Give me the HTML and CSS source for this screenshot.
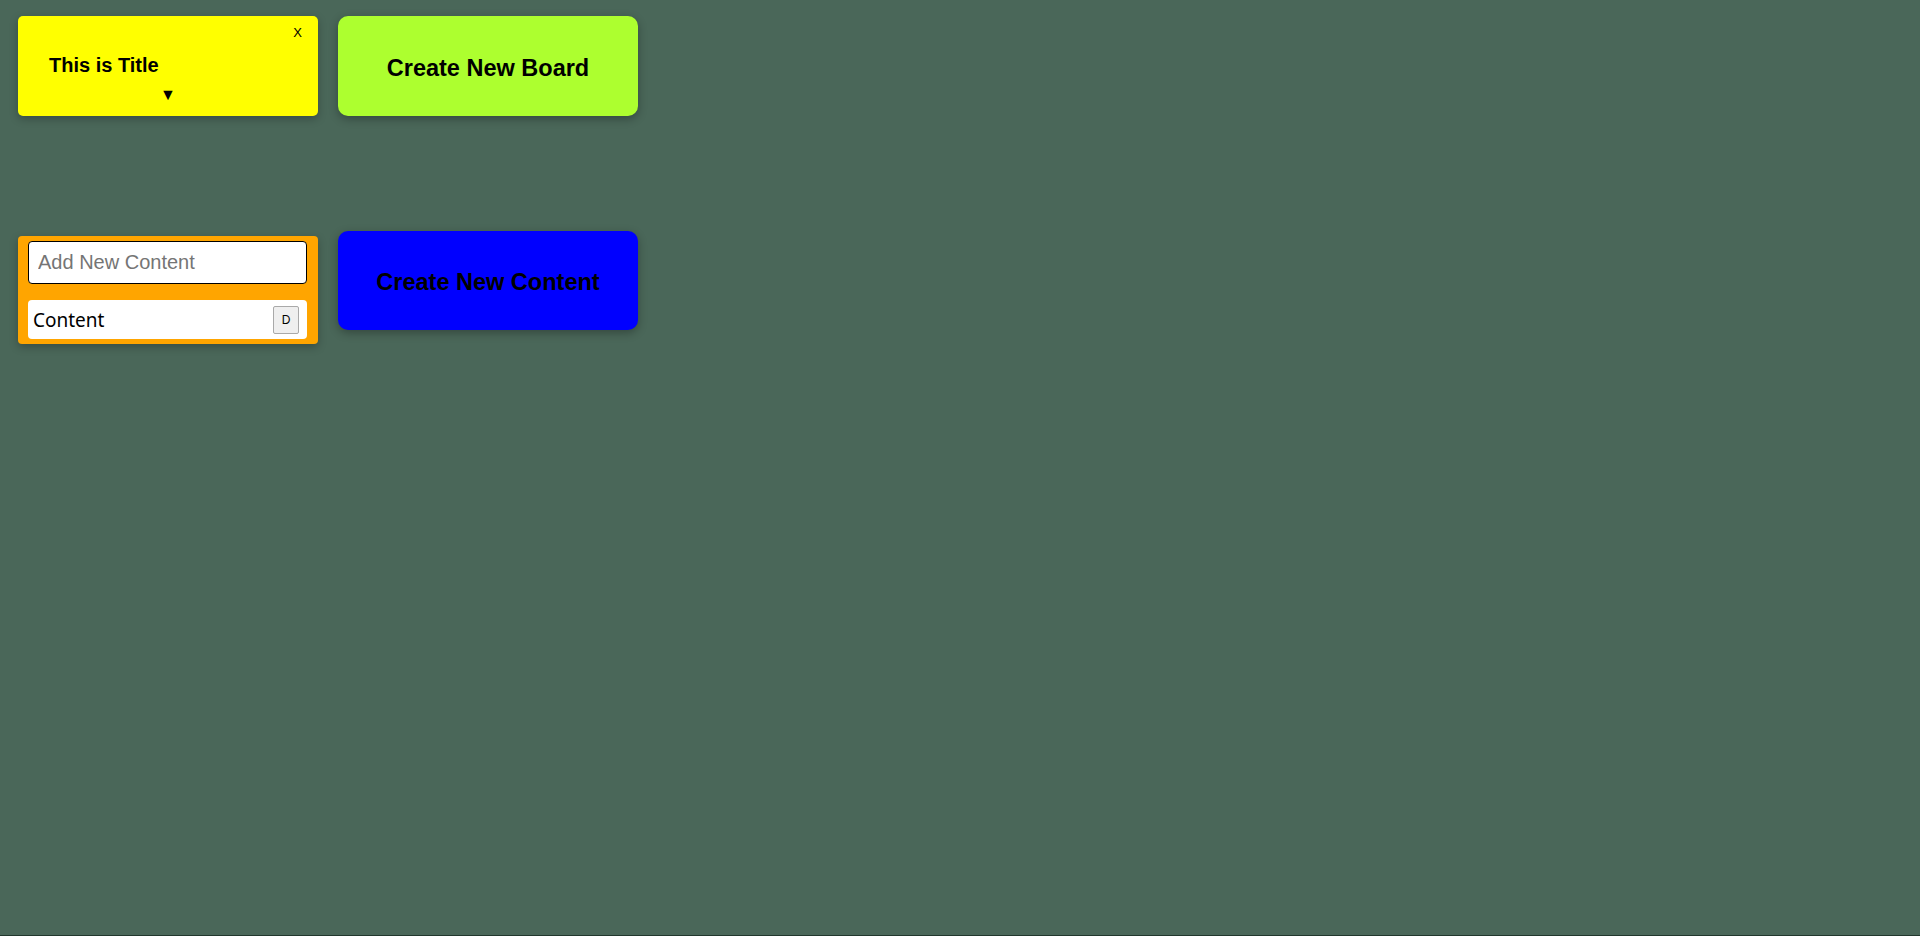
FILE: index.html
```html
<!DOCTYPE html>
<html lang="en">
<head>
<meta charset="utf-8">
<title>Boards</title>
<link rel="stylesheet" href="styles.css">
</head>
<body>
<div class="page">
  <div class="row row-top">
    <div class="board">
      <button class="close">X</button>
      <h3 class="board-title">This is Title</h3>
      <div class="toggle">&#9660;</div>
    </div>
    <button class="create create-board">Create New Board</button>
  </div>
  <div class="row row-bottom">
    <div class="content-card">
      <input class="content-input" type="text" placeholder="Add New Content">
      <div class="content-item">
        <span class="content-text">Content</span>
        <button class="del">D</button>
      </div>
    </div>
    <button class="create create-content">Create New Content</button>
  </div>
</div>
</body>
</html>
```

FILE: styles.css
```css
html {
  background: #22372d;
}
body {
  margin: 0;
  height: 935px;
  background: #4a6759;
  font-family: "Liberation Sans", Arial, sans-serif;
}
.page {
  padding: 16px 18px;
}
.row {
  display: flex;
  gap: 20px;
  align-items: flex-start;
}
.row-bottom {
  margin-top: 115px;
}
.board {
  position: relative;
  width: 300px;
  height: 100px;
  box-sizing: border-box;
  background: #ffff00;
  border-radius: 5px;
  box-shadow: 0 3px 8px rgba(0, 0, 0, 0.25);
  padding: 38px 31px 0;
}
.close {
  position: absolute;
  top: 7px;
  right: 12px;
  background: none;
  border: none;
  padding: 2px 4px;
  font-family: "Liberation Sans", Arial, sans-serif;
  font-size: 13px;
  color: #000;
}
.board-title {
  margin: 0;
  font-size: 20px;
  font-weight: bold;
  line-height: 23px;
}
.toggle {
  text-align: center;
  font-size: 16px;
  line-height: 18px;
  margin-top: 9px;
  margin-left: -31px;
  margin-right: -31px;
}
.create {
  width: 300px;
  height: 100px;
  border: none;
  border-radius: 10px;
  box-shadow: 0 3px 10px rgba(0, 0, 0, 0.3);
  font-family: "Liberation Sans", Arial, sans-serif;
  font-size: 23.5px;
  font-weight: bold;
  color: #000;
  padding: 4px 0 0;
}
.create-board {
  background: #adff2f;
}
.create-content {
  background: #0000ff;
  height: 99px;
}
.content-card {
  width: 300px;
  box-sizing: border-box;
  margin-top: 5px;
  background: #ffa500;
  border-radius: 4px;
  box-shadow: 0 3px 8px rgba(0, 0, 0, 0.25);
  padding: 5px 11px 5px 10px;
  display: flex;
  flex-direction: column;
  gap: 16px;
}
.content-input {
  height: 43px;
  box-sizing: border-box;
  border: 1px solid #000;
  border-radius: 4px;
  padding: 0 9px;
  font-family: "Liberation Sans", Arial, sans-serif;
  font-size: 20px;
  background: #fff;
}
.content-input::placeholder {
  color: #757575;
}
.content-item {
  height: 39px;
  box-sizing: border-box;
  background: #fff;
  border-radius: 4px;
  display: flex;
  align-items: center;
  justify-content: space-between;
  padding: 0 8px 0 5px;
}
.content-text {
  font-family: "Noto Sans", "Open Sans", sans-serif;
  font-size: 19px;
  color: #000;
}
.del {
  width: 26px;
  height: 28px;
  padding: 0;
  background: #efefef;
  border: 1px solid #a9a9a9;
  border-radius: 2px;
  font-family: "Liberation Sans", Arial, sans-serif;
  font-size: 12px;
  color: #000;
}
```
